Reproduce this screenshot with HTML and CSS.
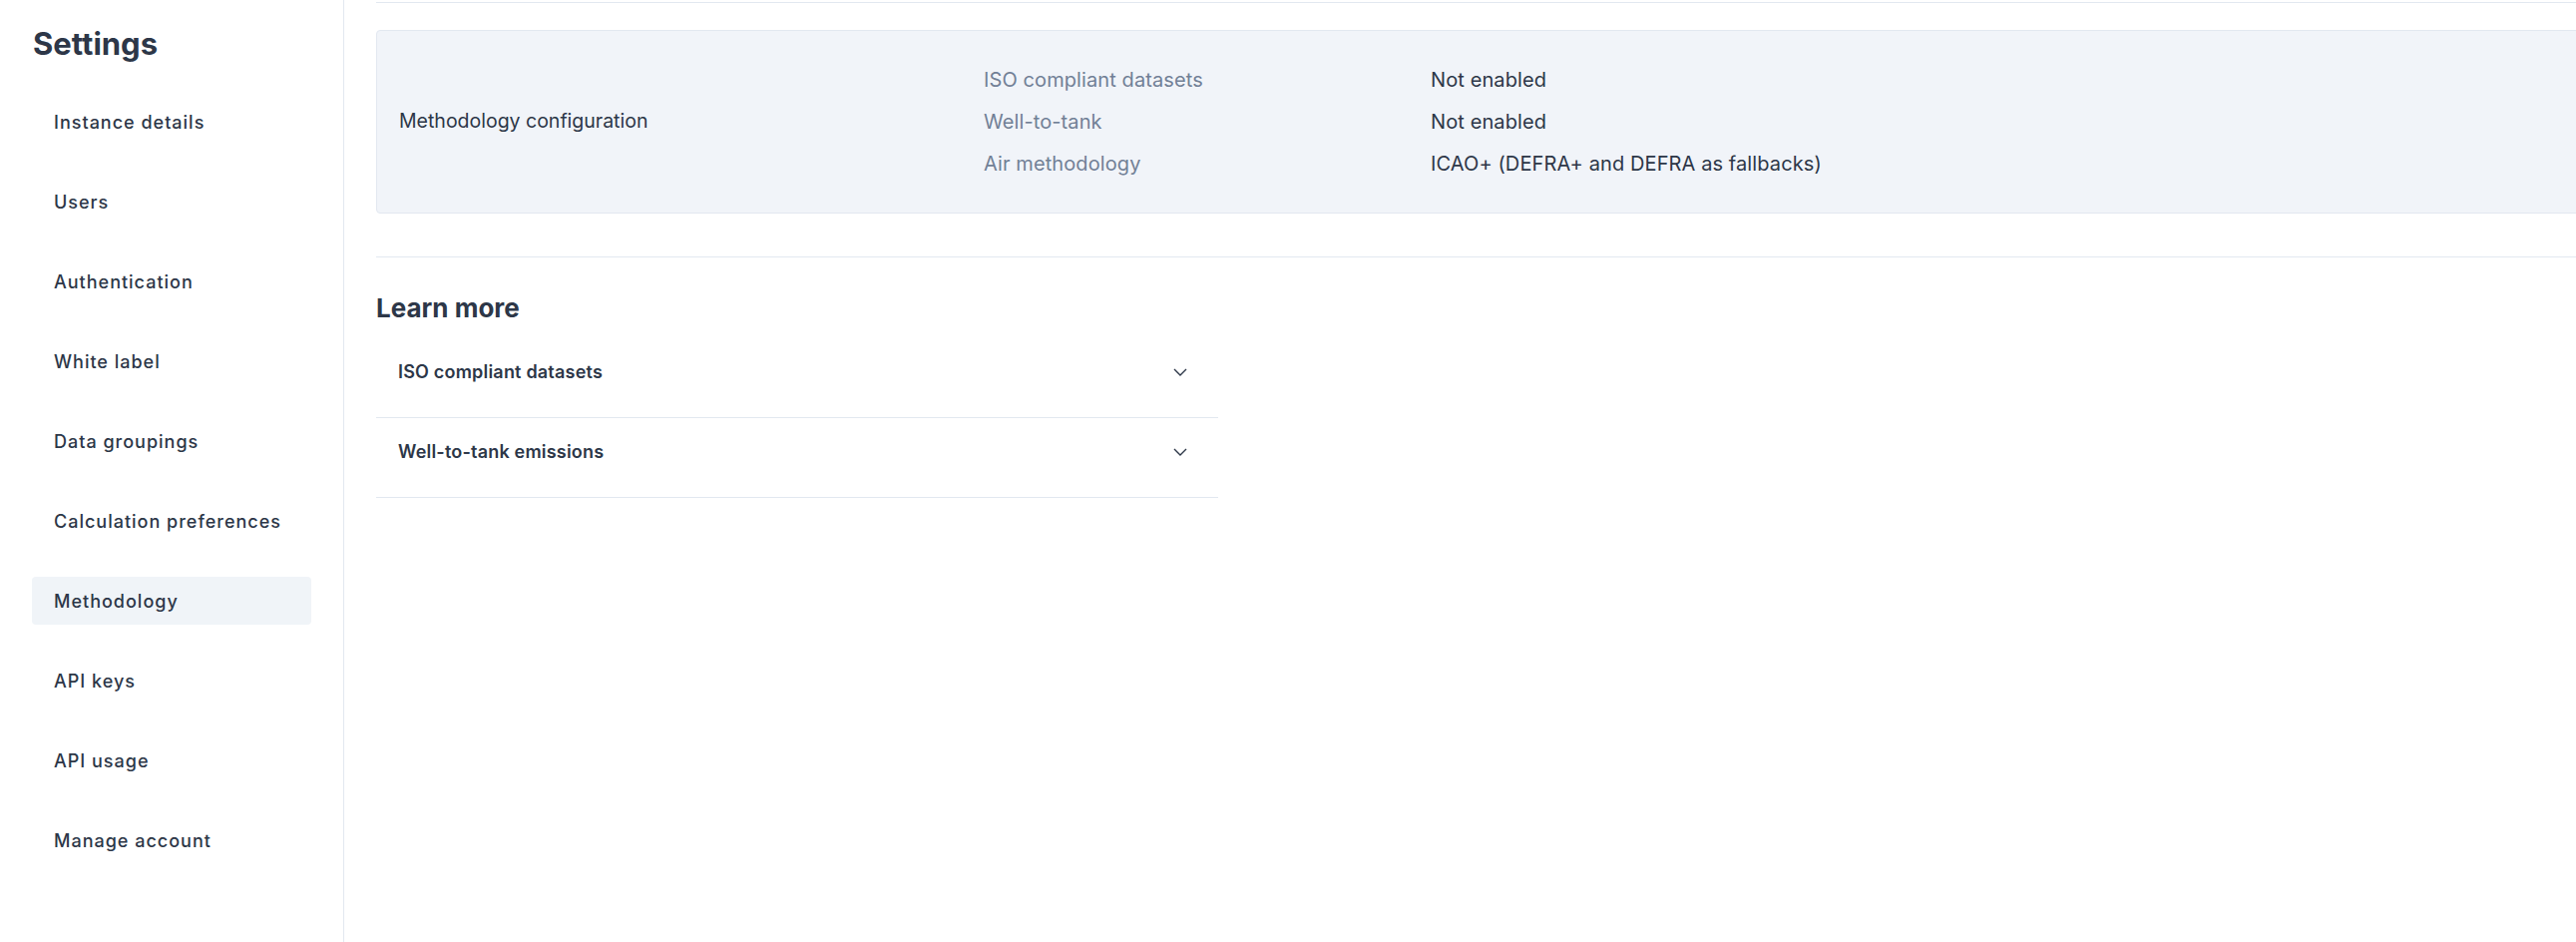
FILE: index.html
```html
<!DOCTYPE html>
<html lang="en">
<head>
  <meta charset="UTF-8">
  <meta name="viewport" content="width=device-width, initial-scale=1.0">
  <title>Settings - Methodology</title>
  <link rel="stylesheet" href="styles.css">
</head>
<body>

  <div class="layout">
    <aside class="sidebar">
      <h1 class="sidebar-title">Settings</h1>
      <nav class="nav">
        <a class="nav-item" href="#">Instance details</a>
        <a class="nav-item" href="#">Users</a>
        <a class="nav-item" href="#">Authentication</a>
        <a class="nav-item" href="#">White label</a>
        <a class="nav-item" href="#">Data groupings</a>
        <a class="nav-item" href="#">Calculation preferences</a>
        <a class="nav-item active" href="#">Methodology</a>
        <a class="nav-item" href="#">API keys</a>
        <a class="nav-item" href="#">API usage</a>
        <a class="nav-item" href="#">Manage account</a>
      </nav>
    </aside>

    <main class="main">
      <div class="content">
        <hr class="divider top">

        <div class="config-box">
          <div class="config-title">Methodology configuration</div>
          <dl class="config-list">
            <dt>ISO compliant datasets</dt>
            <dd>Not enabled</dd>
            <dt>Well-to-tank</dt>
            <dd>Not enabled</dd>
            <dt>Air methodology</dt>
            <dd>ICAO+ (DEFRA+ and DEFRA as fallbacks)</dd>
          </dl>
        </div>

        <hr class="divider">

        <h2 class="section-title">Learn more</h2>
        <div class="accordion">
          <button class="accordion-button">
            <span>ISO compliant datasets</span>
            <svg class="chevron" width="14" height="8" viewBox="0 0 14 8"><path d="M1 1l6 6 6-6" fill="none" stroke="#2d3748" stroke-width="1.4"/></svg>
          </button>
          <button class="accordion-button">
            <span>Well-to-tank emissions</span>
            <svg class="chevron" width="14" height="8" viewBox="0 0 14 8"><path d="M1 1l6 6 6-6" fill="none" stroke="#2d3748" stroke-width="1.4"/></svg>
          </button>
        </div>
      </div>
    </main>
  </div>

</body>
</html>
```

FILE: styles.css
```css
body {
  margin: 0;
  font-family: Inter, "Noto Sans", sans-serif;
  color: #2d3748;
  background-color: #fff;
  overflow: hidden;
}
.layout {
  display: flex;
  height: 100vh;
}
.sidebar {
  flex: 0 0 280px;
  padding: 24px 32px;
  border-right: 1px solid #e2e8f0;
}
.sidebar-title {
  margin: 0 0 34px;
  font-size: 31px;
  line-height: 40px;
  font-weight: 700;
  padding-left: 1px;
}
.nav {
  display: flex;
  flex-direction: column;
  gap: 32px;
}
.nav-item {
  display: flex;
  align-items: center;
  height: 48px;
  padding: 0 22px;
  border-radius: 4px;
  font-size: 18px;
  font-weight: 500;
  letter-spacing: 1px;
  color: #2d3748;
  text-decoration: none;
}
.nav-item.active {
  background-color: #f0f4f8;
}
.main {
  flex: 1;
  overflow: hidden;
  padding-left: 32px;
}
.content {
  width: 2400px;
}
.divider {
  border: none;
  border-top: 1px solid #e2e8f0;
  margin: 43px 0 0;
}
.divider.top {
  margin-top: 2px;
}
.config-box {
  display: flex;
  align-items: center;
  margin-top: 27px;
  padding: 28px 22px;
  background-color: #f1f4f9;
  border: 1px solid #e2e8f0;
  border-radius: 4px;
}
.config-title {
  flex: 0 0 586px;
  font-size: 19.5px;
  margin-top: -2px;
}
.config-list {
  display: grid;
  grid-template-columns: 448px auto;
  margin: 0;
  font-size: 20px;
  line-height: 42px;
  letter-spacing: 0.1px;
}
.config-list dt {
  color: #718096;
}
.config-list dd {
  margin: 0;
}
.section-title {
  margin: 35px 0 14px;
  font-size: 26px;
  line-height: 32px;
  font-weight: 700;
}
.accordion {
  width: 844px;
}
.accordion-button {
  display: flex;
  justify-content: space-between;
  align-items: center;
  width: 100%;
  height: 80px;
  padding: 0 31px 12px 22px;
  background: none;
  border: none;
  border-bottom: 1px solid #e2e8f0;
  font-family: inherit;
  font-size: 18px;
  font-weight: 600;
  letter-spacing: 0.2px;
  color: #2d3748;
  cursor: pointer;
}
```
